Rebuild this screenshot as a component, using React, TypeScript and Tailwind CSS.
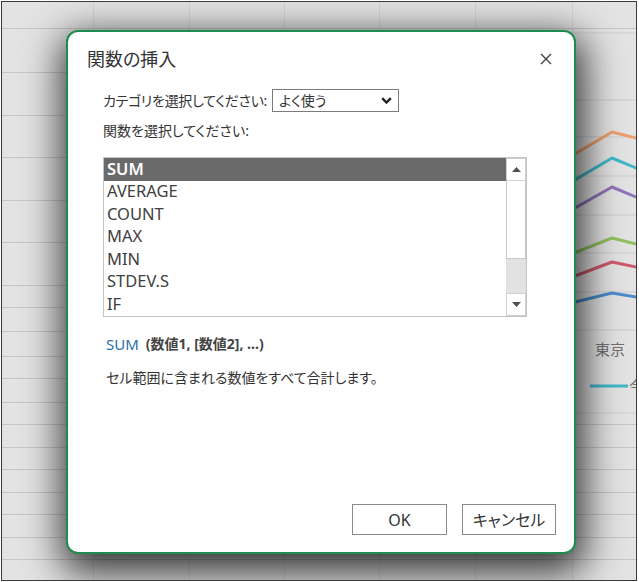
import React from "react";

const rowHeights = [27, 44, 43, 42, 43, 42, 43, 22, 24, 25, 22, 24, 22, 23, 22, 23, 22, 23, 22, 30];
const colWidths = [92, 96, 95, 95, 96, 97, 100];

const functions = ["SUM", "AVERAGE", "COUNT", "MAX", "MIN", "STDEV.S", "IF"];

const series = [
  { color: "#ee9f6d", points: "480,210 612,132 660,144" },
  { color: "#3fb9c9", points: "480,236 612,158 660,178" },
  { color: "#8f74b9", points: "480,262 612,187 660,207" },
  { color: "#92c062", points: "480,290 612,238 660,250" },
  { color: "#cc5b6d", points: "480,312 612,262 660,272" },
  { color: "#4c8dcc", points: "480,325 612,293 660,301" },
];

const Sheet = () => {
  return (
    <div className="flex flex-col">
      {rowHeights.map((h, i) => (
        <div key={i} className="flex shrink-0 border-b border-[#c6c6c6]" style={{ height: h }}>
          {colWidths.map((w, j) => (
            <div key={j} className="shrink-0 border-r border-[#d4d4d4]" style={{ width: w }} />
          ))}
        </div>
      ))}
    </div>
  );
};

const Chart = () => {
  return (
    <svg className="absolute left-0 top-0" width="636" height="580" viewBox="2 2 636 580">
      <rect x="300" y="33" width="400" height="380" fill="#e3e3e3" stroke="#cfcfcf" />
      {[100, 137, 176, 215, 253, 292, 330].map((y) => (
        <line key={y} x1="300" x2="700" y1={y} y2={y} stroke="#cbcbcb" strokeWidth="1" />
      ))}
      {series.map((s) => (
        <polyline key={s.color} points={s.points} fill="none" stroke={s.color} strokeWidth="3" strokeLinejoin="round" />
      ))}
      <text x="595" y="355" fontSize="15" fill="#707070" fontFamily="Noto Sans CJK JP, sans-serif">
        東京
      </text>
      <line x1="590" x2="628" y1="386" y2="386" stroke="#3fb9c9" strokeWidth="3" />
      <text x="629" y="392" fontSize="15" fill="#707070" fontFamily="Noto Sans CJK JP, sans-serif">
        今年
      </text>
    </svg>
  );
};

const Triangle = ({ down }: { down?: boolean }) => (
  <svg width="9" height="5" viewBox="0 0 9 5">
    <path d={down ? "M0 0 L9 0 L4.5 5 Z" : "M0 5 L9 5 L4.5 0 Z"} fill="#505050" />
  </svg>
);

const InsertFunctionDialog = () => {
  return (
    <div className="absolute left-[64px] top-[28px] flex h-[524px] w-[510px] flex-col rounded-[12px] border-2 border-[#1f8b4f] bg-white text-[#333] shadow-[2px_12px_38px_6px_rgba(0,0,0,0.78)]">
      {/* title bar */}
      <div className="flex h-[54px] items-center justify-between pl-[19px] pr-[22px]">
        <span className="text-[18px] leading-none">関数の挿入</span>
        <svg width="12" height="12" viewBox="0 0 12 12">
          <path d="M1 1 L11 11 M11 1 L1 11" stroke="#444" strokeWidth="1.4" />
        </svg>
      </div>

      <div className="flex flex-col pl-[35px] text-[14px]">
        <div className="mt-[3px] flex items-center">
          <span className="w-[169px] leading-[20px] tracking-[-0.3px]">カテゴリを選択してください:</span>
          <div className="flex h-[23px] w-[127px] items-center justify-between border border-[#7b7b7b] pl-[6px] pr-[6px]">
            <span className="leading-none">よく使う</span>
            <svg width="11" height="7" viewBox="0 0 11 7">
              <path d="M1.2 1.2 L5.5 5.5 L9.8 1.2" fill="none" stroke="#222" strokeWidth="2.4" />
            </svg>
          </div>
        </div>

        <div className="mt-[9px] h-[20px] leading-[20px]">関数を選択してください:</div>

        {/* function list */}
        <div className="mt-[16px] flex h-[160px] w-[424px] border border-[#c4c4c4]">
          <div className="flex flex-1 flex-col">
            {functions.map((f, i) => (
              <div
                key={f}
                className={
                  i === 0
                    ? "flex h-[22.5px] items-center bg-[#6a6a6a] pl-[3px] font-['Noto_Sans',sans-serif] text-[16.5px] font-semibold text-white"
                    : "flex h-[22.5px] items-center pl-[3px] font-['Noto_Sans',sans-serif] text-[16.5px] text-[#404040]"
                }
              >
                {f}
              </div>
            ))}
          </div>
          <div className="flex w-[20px] flex-col bg-[#e2e2e2]">
            <div className="flex h-[23px] items-center justify-center border border-[#d0d0d0] bg-white">
              <Triangle />
            </div>
            <div className="h-[78px] border border-t-0 border-[#c8c8c8] bg-white" />
            <div className="flex-1" />
            <div className="flex h-[23px] items-center justify-center border border-[#d0d0d0] bg-white">
              <Triangle down />
            </div>
          </div>
        </div>

        <div className="mt-[17px] flex h-[20px] items-center gap-[7px] pl-[3px] leading-[20px]">
          <span className="font-['Noto_Sans',sans-serif] text-[15px] text-[#2b6fa8]">SUM</span>
          <span className="font-bold text-[#444]">(数値1, [数値2], ...)</span>
        </div>

        <div className="mt-[14px] h-[20px] pl-[3px] leading-[20px]">セル範囲に含まれる数値をすべて合計します。</div>
      </div>

      <div className="mt-auto flex justify-end gap-[15px] pb-[17px] pr-[18px] text-[16px]">
        <div className="flex h-[31px] w-[95px] items-center justify-center border border-[#8a8a8a]">OK</div>
        <div className="flex h-[31px] w-[94px] items-center justify-center border border-[#8a8a8a]">キャンセル</div>
      </div>
    </div>
  );
};

export default function App() {
  return (
    <div className="h-[582px] w-[639px] bg-white pl-[1px] pt-[1px] font-['Noto_Sans','Noto_Sans_CJK_JP',sans-serif] [font-feature-settings:'palt']">
      <div className="relative h-[580px] w-[636px] overflow-hidden border border-[#3a3a3a] bg-[#e3e3e3]">
        <Sheet />
        <Chart />
        <InsertFunctionDialog />
      </div>
    </div>
  );
}
